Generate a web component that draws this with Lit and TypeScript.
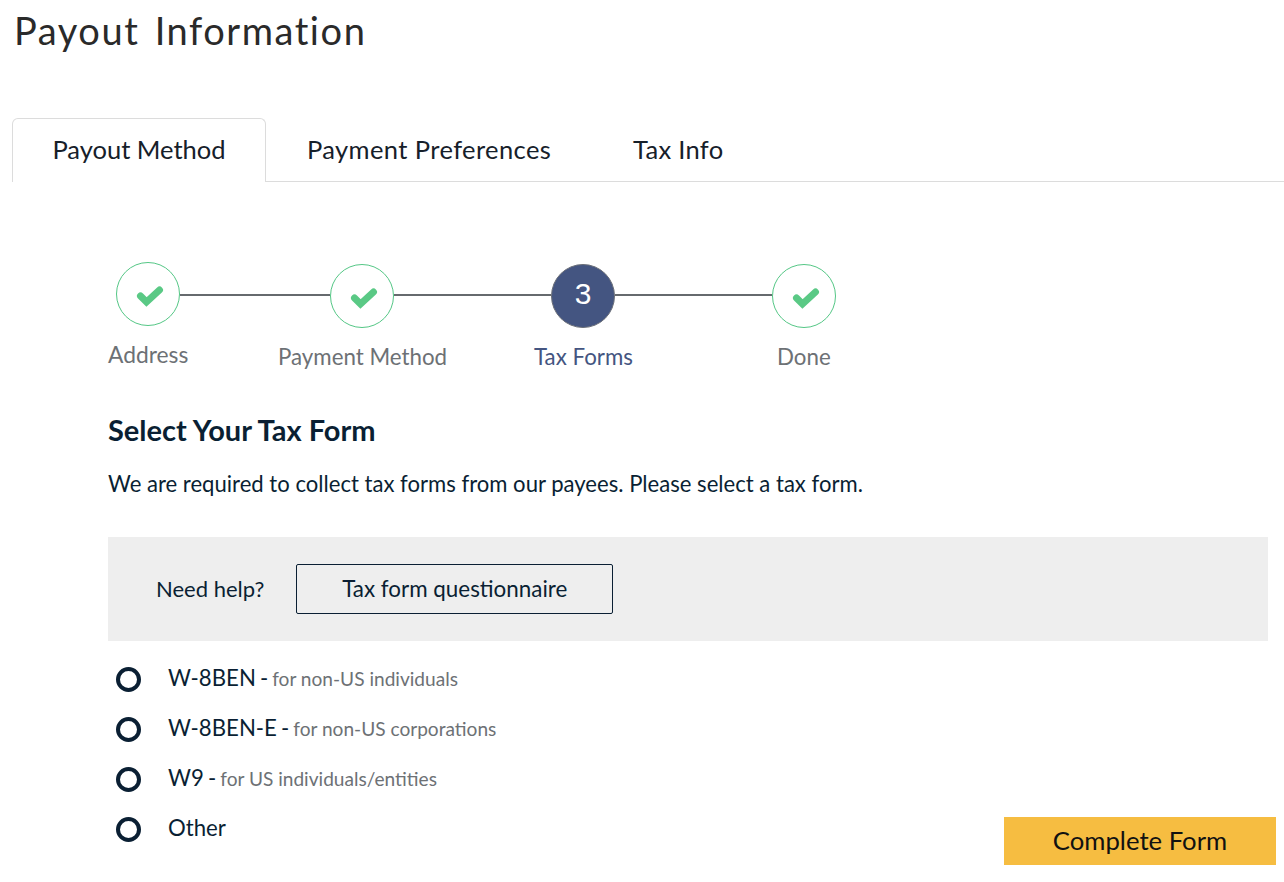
import { LitElement, html, css, svg } from "lit";
import { customElement } from "lit/decorators.js";

const check = svg`<svg class="check" viewBox="0 0 28 22" width="28" height="22"><path d="M4.5 11 L10.5 17 L23.5 5" fill="none" stroke="#5ac985" stroke-width="7" stroke-linecap="round" stroke-linejoin="miter"/></svg>`;

@customElement("app-root")
export class AppRoot extends LitElement {
  static styles = css`
    :host { display: block; width: 1284px; height: 882px; overflow: hidden; background: #fff; font-family: "Lato", sans-serif; color: #0a1f33; }
    h1 { margin: 0; padding: 7px 0 0 14px; height: 118px; box-sizing: border-box; font: 400 38px/46px "Lato", sans-serif; letter-spacing: 1.55px; word-spacing: 4px; color: #2a2a2a; }
    .tabs { display: flex; height: 64px; margin-left: 12px; border-bottom: 1px solid #dcdcdc; box-sizing: border-box; font: 400 25.5px/62px "Lato", sans-serif; color: #16202a; }
    .tab { padding: 0 41px; white-space: nowrap; }
    .tab.active { border: 1px solid #dcdcdc; border-bottom: 0; border-radius: 6px 6px 0 0; height: 64px; box-sizing: border-box; background: #fff; width: 254px; padding: 0; text-align: center; line-height: 60px; }
    .tab.second { padding: 0 41px; width: 326px; box-sizing: border-box; letter-spacing: .4px; }
    .tab.third { letter-spacing: .3px; }
    main { padding: 80px 16px 0 108px; }
    .circles { display: flex; align-items: center; padding-left: 8px; height: 68px; }
    .circle { width: 64px; height: 64px; flex: none; box-sizing: border-box; border-radius: 50%; border: 1px solid #55c786; display: flex; align-items: center; justify-content: center; }
    .circle .check { margin: 3px 0 0 3px; }
    .circle.first { margin-bottom: 4px; }
    .circle.current { background: #445581; border: 1px solid #6b6f78; color: #fff; font: 400 30px/1 "Liberation Sans", sans-serif; padding-bottom: 4px; }
    .line { height: 2px; background: #666a6e; margin-bottom: 2px; }
    .l150 { width: 150px; } .l157 { width: 157px; }
    .labels { display: flex; font-size: 22.3px; line-height: 28px; color: #6d7175; margin-top: 13px; height: 30px; }
    .labels span { white-space: nowrap; }
    .labels .first { width: 170px; margin-top: -3px; font-size: 22.8px; }
    .labels .second { width: 256px; }
    .labels .third { width: 243px; color: #445581; }
    h2 { margin: 39px 0 0; font: 700 29px/36px "Lato", sans-serif; color: #0a1f33; }
    p { margin: 21px 0 0; font-size: 22.1px; line-height: 30px; }
    .help { display: flex; align-items: center; gap: 32px; height: 104px; margin-top: 38px; padding-left: 48px; background: #eee; font-size: 22px; }
    .help span { padding-bottom: 2px; }
    .help button { width: 317px; height: 50px; background: transparent; border: 1px solid #0a1f33; border-radius: 2px; font: 400 22.4px "Lato", sans-serif; color: #0a1f33; padding: 0 0 2px; }
    .options { display: flex; flex-direction: column; margin-top: 11px; }
    .opt { display: flex; align-items: center; height: 50px; padding-left: 8px; font-size: 22.2px; word-spacing: -1.6px; }
    .radio { width: 25px; height: 25px; box-sizing: border-box; border: 4.5px solid #0a1f33; border-radius: 50%; margin: 5px 27px 0 0; flex: none; }
    .opt small { font-size: 19.1px; color: #6d7175; word-spacing: 0; }
    .foot { display: flex; justify-content: flex-end; margin: -35px -8px 0 0; }
    .cta { position: relative; width: 272px; height: 48px; background: #f6bd41; border: 0; font: 400 25.7px "Lato", sans-serif; color: #111; padding: 0 0 2px; }
  `;
  render() {
    return html`
      <h1>Payout Information</h1>
      <nav class="tabs">
        <div class="tab active">Payout Method</div>
        <div class="tab second">Payment Preferences</div>
        <div class="tab third">Tax Info</div>
      </nav>
      <main>
        <div class="circles">
          <div class="circle first">${check}</div><div class="line l150"></div>
          <div class="circle">${check}</div><div class="line l157"></div>
          <div class="circle current">3</div><div class="line l157"></div>
          <div class="circle">${check}</div>
        </div>
        <div class="labels"><span class="first">Address</span><span class="second">Payment Method</span><span class="third">Tax Forms</span><span>Done</span></div>
        <h2>Select Your Tax Form</h2>
        <p>We are required to collect tax forms from our payees. Please select a tax form.</p>
        <div class="help"><span>Need help?</span><button>Tax form questionnaire</button></div>
        <div class="options">
          <label class="opt"><span class="radio"></span><span>W-8BEN - <small>for non-US individuals</small></span></label>
          <label class="opt"><span class="radio"></span><span>W-8BEN-E - <small>for non-US corporations</small></span></label>
          <label class="opt"><span class="radio"></span><span>W9 - <small>for US individuals/entities</small></span></label>
          <label class="opt"><span class="radio"></span><span>Other</span></label>
        </div>
        <div class="foot"><button class="cta">Complete Form</button></div>
      </main>
    `;
  }
}
